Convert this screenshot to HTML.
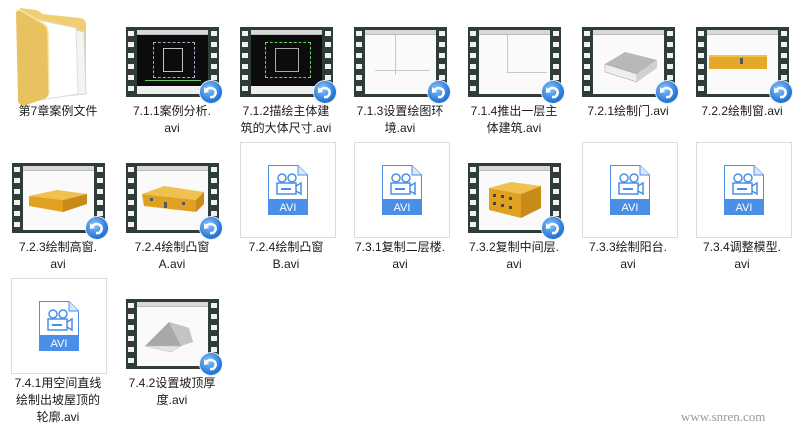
<!DOCTYPE html>
<html><head><meta charset="utf-8"><style>
body{margin:0;width:798px;height:430px;background:#fff;position:relative;overflow:hidden;font-family:"Liberation Sans","Noto Sans CJK SC",sans-serif;}
.lbl{position:absolute;width:112px;text-align:center;font-size:12px;line-height:17px;color:#1a1a1a;}
.box{position:absolute;width:94px;height:94px;border:1px solid #dcdcdc;background:#fff;}
.box svg{position:absolute;left:27px;top:22px;}
.film{position:absolute;width:93px;height:70px;background:#2e3d39;}
.strip{position:absolute;top:0;width:10px;height:70px;background:repeating-linear-gradient(to bottom,transparent 0 4px,#f2f2f2 4px 9px,transparent 9px 11px) no-repeat center/6px 100%;}
.strip.l{left:0}.strip.r{right:0}
.pic{position:absolute;left:11px;top:3px;width:71px;height:64px;background:#fafafa;overflow:hidden;}
.pic .tb{position:absolute;left:0;top:0;width:100%;height:4px;background:#d8d8d8;border-bottom:1px solid #bbb;}
.badge{position:absolute;width:22px;height:22px;border-radius:50%;right:-3px;bottom:-6px;background:radial-gradient(circle at 40% 35%,#8cc4ff,#2a7ddc 60%,#1457b0);box-shadow:0 0 0 1px #e8f0fa;}
.badge svg{position:absolute;left:3px;top:4px}
.dark{background:#0c0c0c}
.ln{position:absolute;background:#c8c8c8}
</style></head><body>

<!-- folder -->
<svg style="position:absolute;left:14px;top:6px" width="80" height="100" viewBox="0 0 80 100">
<path d="M6 2 L22 4 Q26 5 28 8 L66 12 Q72 13 72 18 L72 84 L6 84 Z" fill="#f0cf74"/>
<path d="M30 16 L70 26 L72 88 L32 92 Z" fill="#f4f4f4" stroke="#d6d6d6"/>
<path d="M24 14 L62 22 L64 88 L26 94 Z" fill="#fff" stroke="#dedede"/>
<path d="M2 6 Q4 3 8 5 L30 18 Q34 21 34 27 L35 86 Q35 91 30 93 L12 99 Q4 100 4 94 Z" fill="#e8c25e"/>
<path d="M2 6 Q4 3 8 5 L30 18 Q34 21 34 27 L35 86" fill="none" stroke="#f9e5a6" stroke-width="1.5"/>
</svg>
<div class="lbl" style="left:2px;top:103px">第7章案例文件</div>

<!-- row 1 films -->
<div class="film" style="left:126px;top:27px"><div class="strip l"></div><div class="strip r"></div><div class="pic dark">
<div class="tb"></div>
<div style="position:absolute;left:16px;top:12px;width:40px;height:34px;border:1px dashed #b8a0c8"></div>
<div style="position:absolute;left:26px;top:18px;width:18px;height:22px;border:1px solid #c0c0c0"></div>
<div style="position:absolute;left:8px;top:50px;width:56px;height:1px;background:#6c6"></div>
<div style="position:absolute;left:0;top:56px;width:71px;height:8px;background:#eee"></div>
</div><div class="badge"><svg width="16" height="14"><path d="M3 5 Q8 1 12 5 Q14 9 10 12 L7 12" fill="none" stroke="#fff" stroke-width="2.5"/><path d="M1 2 L6 7 L1 8 Z" fill="#fff"/></svg></div></div>
<div class="lbl" style="left:116px;top:103px">7.1.1案例分析.<br>avi</div>

<div class="film" style="left:240px;top:27px"><div class="strip l"></div><div class="strip r"></div><div class="pic dark">
<div class="tb"></div>
<div style="position:absolute;left:14px;top:12px;width:44px;height:34px;border:1px dashed #6c6"></div>
<div style="position:absolute;left:24px;top:18px;width:22px;height:22px;border:1px solid #aaa"></div>
<div style="position:absolute;left:0;top:56px;width:71px;height:8px;background:#eee"></div>
</div><div class="badge"><svg width="16" height="14"><path d="M3 5 Q8 1 12 5 Q14 9 10 12 L7 12" fill="none" stroke="#fff" stroke-width="2.5"/><path d="M1 2 L6 7 L1 8 Z" fill="#fff"/></svg></div></div>
<div class="lbl" style="left:230px;top:103px">7.1.2描绘主体建<br>筑的大体尺寸.avi</div>

<div class="film" style="left:354px;top:27px"><div class="strip l"></div><div class="strip r"></div><div class="pic">
<div class="tb"></div><div class="ln" style="left:30px;top:5px;width:1px;height:40px"></div><div class="ln" style="left:10px;top:40px;width:55px;height:1px"></div>
</div><div class="badge"><svg width="16" height="14"><path d="M3 5 Q8 1 12 5 Q14 9 10 12 L7 12" fill="none" stroke="#fff" stroke-width="2.5"/><path d="M1 2 L6 7 L1 8 Z" fill="#fff"/></svg></div></div>
<div class="lbl" style="left:344px;top:103px">7.1.3设置绘图环<br>境.avi</div>

<div class="film" style="left:468px;top:27px"><div class="strip l"></div><div class="strip r"></div><div class="pic">
<div class="tb"></div><div class="ln" style="left:28px;top:5px;width:1px;height:38px"></div><div class="ln" style="left:28px;top:42px;width:40px;height:1px"></div>
</div><div class="badge"><svg width="16" height="14"><path d="M3 5 Q8 1 12 5 Q14 9 10 12 L7 12" fill="none" stroke="#fff" stroke-width="2.5"/><path d="M1 2 L6 7 L1 8 Z" fill="#fff"/></svg></div></div>
<div class="lbl" style="left:458px;top:103px">7.1.4推出一层主<br>体建筑.avi</div>

<div class="film" style="left:582px;top:27px"><div class="strip l"></div><div class="strip r"></div><div class="pic">
<div class="tb"></div><svg style="position:absolute;left:8px;top:18px" width="60" height="34"><path d="M4 16 L24 4 L56 12 L36 26 Z" fill="#b8b8b8"/><path d="M4 16 L36 26 L36 34 L4 24 Z" fill="#eee" stroke="#999" stroke-width=".5"/><path d="M36 26 L56 12 L56 20 L36 34 Z" fill="#d0d0d0"/></svg>
</div><div class="badge"><svg width="16" height="14"><path d="M3 5 Q8 1 12 5 Q14 9 10 12 L7 12" fill="none" stroke="#fff" stroke-width="2.5"/><path d="M1 2 L6 7 L1 8 Z" fill="#fff"/></svg></div></div>
<div class="lbl" style="left:572px;top:103px">7.2.1绘制门.avi</div>

<div class="film" style="left:696px;top:27px"><div class="strip l"></div><div class="strip r"></div><div class="pic">
<div class="tb"></div><div style="position:absolute;left:2px;top:25px;width:58px;height:12px;background:#e6a82a;border-top:2px solid #f0c050"></div><div style="position:absolute;left:33px;top:28px;width:3px;height:6px;background:#556"></div>
</div><div class="badge"><svg width="16" height="14"><path d="M3 5 Q8 1 12 5 Q14 9 10 12 L7 12" fill="none" stroke="#fff" stroke-width="2.5"/><path d="M1 2 L6 7 L1 8 Z" fill="#fff"/></svg></div></div>
<div class="lbl" style="left:686px;top:103px">7.2.2绘制窗.avi</div>

<!-- row 2 -->
<div class="film" style="left:12px;top:163px"><div class="strip l"></div><div class="strip r"></div><div class="pic">
<div class="tb"></div><svg style="position:absolute;left:4px;top:20px" width="64" height="30"><path d="M2 10 L30 4 L60 8 L36 14 Z" fill="#f0c050"/><path d="M2 10 L36 14 L36 26 L2 20 Z" fill="#e0a020"/><path d="M36 14 L60 8 L60 18 L36 26 Z" fill="#c88a18"/></svg>
</div><div class="badge"><svg width="16" height="14"><path d="M3 5 Q8 1 12 5 Q14 9 10 12 L7 12" fill="none" stroke="#fff" stroke-width="2.5"/><path d="M1 2 L6 7 L1 8 Z" fill="#fff"/></svg></div></div>
<div class="lbl" style="left:2px;top:239px">7.2.3绘制高窗.<br>avi</div>

<div class="film" style="left:126px;top:163px"><div class="strip l"></div><div class="strip r"></div><div class="pic">
<div class="tb"></div><svg style="position:absolute;left:3px;top:16px" width="66" height="36"><path d="M2 12 L24 4 L64 10 L56 18 Z" fill="#f0c050"/><path d="M2 12 L56 18 L56 30 L4 24 Z" fill="#e0a020"/><path d="M56 18 L64 10 L64 22 L56 30 Z" fill="#c88a18"/><rect x="24" y="20" width="3" height="6" fill="#556"/><rect x="10" y="16" width="3" height="3" fill="#556"/><rect x="42" y="20" width="3" height="3" fill="#556"/></svg>
</div><div class="badge"><svg width="16" height="14"><path d="M3 5 Q8 1 12 5 Q14 9 10 12 L7 12" fill="none" stroke="#fff" stroke-width="2.5"/><path d="M1 2 L6 7 L1 8 Z" fill="#fff"/></svg></div></div>
<div class="lbl" style="left:116px;top:239px">7.2.4绘制凸窗<br>A.avi</div>

<div class="box" style="left:240px;top:142px"><svg width="40" height="50" viewBox="0 0 40 50"><path d="M0.5 0.5 L30 0.5 L39.5 10 L39.5 49.5 L0.5 49.5 Z" fill="#fff" stroke="#4a8fe7"/><path d="M30 0.5 L30 10 L39.5 10" fill="#dbe8fa" stroke="#4a8fe7"/><circle cx="14" cy="13" r="4" fill="none" stroke="#4a8fe7" stroke-width="1.5"/><circle cx="24" cy="13" r="4" fill="none" stroke="#4a8fe7" stroke-width="1.5"/><rect x="9" y="18" width="19" height="11" fill="none" stroke="#4a8fe7" stroke-width="1.5"/><path d="M28 21 L33 18 L33 29 L28 26" fill="none" stroke="#4a8fe7" stroke-width="1.5"/><rect x="13" y="23" width="10" height="2" fill="#4a8fe7"/><rect x="0" y="34" width="40" height="16" fill="#4a8fe7"/><text x="20" y="46" text-anchor="middle" font-size="11" fill="#fff" font-family="Liberation Sans,sans-serif">AVI</text></svg></div>
<div class="lbl" style="left:230px;top:239px">7.2.4绘制凸窗<br>B.avi</div>

<div class="box" style="left:354px;top:142px"><svg width="40" height="50" viewBox="0 0 40 50"><path d="M0.5 0.5 L30 0.5 L39.5 10 L39.5 49.5 L0.5 49.5 Z" fill="#fff" stroke="#4a8fe7"/><path d="M30 0.5 L30 10 L39.5 10" fill="#dbe8fa" stroke="#4a8fe7"/><circle cx="14" cy="13" r="4" fill="none" stroke="#4a8fe7" stroke-width="1.5"/><circle cx="24" cy="13" r="4" fill="none" stroke="#4a8fe7" stroke-width="1.5"/><rect x="9" y="18" width="19" height="11" fill="none" stroke="#4a8fe7" stroke-width="1.5"/><path d="M28 21 L33 18 L33 29 L28 26" fill="none" stroke="#4a8fe7" stroke-width="1.5"/><rect x="13" y="23" width="10" height="2" fill="#4a8fe7"/><rect x="0" y="34" width="40" height="16" fill="#4a8fe7"/><text x="20" y="46" text-anchor="middle" font-size="11" fill="#fff" font-family="Liberation Sans,sans-serif">AVI</text></svg></div>
<div class="lbl" style="left:344px;top:239px">7.3.1复制二层楼.<br>avi</div>

<div class="film" style="left:468px;top:163px"><div class="strip l"></div><div class="strip r"></div><div class="pic">
<div class="tb"></div><svg style="position:absolute;left:6px;top:14px" width="60" height="42"><path d="M4 8 L26 2 L56 6 L36 14 Z" fill="#f0c050"/><path d="M4 8 L36 14 L36 38 L4 30 Z" fill="#e0a020"/><path d="M36 14 L56 6 L56 28 L36 38 Z" fill="#c88a18"/><g fill="#445"><rect x="8" y="14" width="3" height="3"/><rect x="16" y="15" width="3" height="3"/><rect x="24" y="17" width="3" height="3"/><rect x="8" y="22" width="3" height="3"/><rect x="16" y="24" width="3" height="3"/><rect x="24" y="26" width="3" height="3"/></g></svg>
</div><div class="badge"><svg width="16" height="14"><path d="M3 5 Q8 1 12 5 Q14 9 10 12 L7 12" fill="none" stroke="#fff" stroke-width="2.5"/><path d="M1 2 L6 7 L1 8 Z" fill="#fff"/></svg></div></div>
<div class="lbl" style="left:458px;top:239px">7.3.2复制中间层.<br>avi</div>

<div class="box" style="left:582px;top:142px"><svg width="40" height="50" viewBox="0 0 40 50"><path d="M0.5 0.5 L30 0.5 L39.5 10 L39.5 49.5 L0.5 49.5 Z" fill="#fff" stroke="#4a8fe7"/><path d="M30 0.5 L30 10 L39.5 10" fill="#dbe8fa" stroke="#4a8fe7"/><circle cx="14" cy="13" r="4" fill="none" stroke="#4a8fe7" stroke-width="1.5"/><circle cx="24" cy="13" r="4" fill="none" stroke="#4a8fe7" stroke-width="1.5"/><rect x="9" y="18" width="19" height="11" fill="none" stroke="#4a8fe7" stroke-width="1.5"/><path d="M28 21 L33 18 L33 29 L28 26" fill="none" stroke="#4a8fe7" stroke-width="1.5"/><rect x="13" y="23" width="10" height="2" fill="#4a8fe7"/><rect x="0" y="34" width="40" height="16" fill="#4a8fe7"/><text x="20" y="46" text-anchor="middle" font-size="11" fill="#fff" font-family="Liberation Sans,sans-serif">AVI</text></svg></div>
<div class="lbl" style="left:572px;top:239px">7.3.3绘制阳台.<br>avi</div>

<div class="box" style="left:696px;top:142px"><svg width="40" height="50" viewBox="0 0 40 50"><path d="M0.5 0.5 L30 0.5 L39.5 10 L39.5 49.5 L0.5 49.5 Z" fill="#fff" stroke="#4a8fe7"/><path d="M30 0.5 L30 10 L39.5 10" fill="#dbe8fa" stroke="#4a8fe7"/><circle cx="14" cy="13" r="4" fill="none" stroke="#4a8fe7" stroke-width="1.5"/><circle cx="24" cy="13" r="4" fill="none" stroke="#4a8fe7" stroke-width="1.5"/><rect x="9" y="18" width="19" height="11" fill="none" stroke="#4a8fe7" stroke-width="1.5"/><path d="M28 21 L33 18 L33 29 L28 26" fill="none" stroke="#4a8fe7" stroke-width="1.5"/><rect x="13" y="23" width="10" height="2" fill="#4a8fe7"/><rect x="0" y="34" width="40" height="16" fill="#4a8fe7"/><text x="20" y="46" text-anchor="middle" font-size="11" fill="#fff" font-family="Liberation Sans,sans-serif">AVI</text></svg></div>
<div class="lbl" style="left:686px;top:239px">7.3.4调整模型.<br>avi</div>

<!-- row 3 -->
<div class="box" style="left:11px;top:278px"><svg width="40" height="50" viewBox="0 0 40 50"><path d="M0.5 0.5 L30 0.5 L39.5 10 L39.5 49.5 L0.5 49.5 Z" fill="#fff" stroke="#4a8fe7"/><path d="M30 0.5 L30 10 L39.5 10" fill="#dbe8fa" stroke="#4a8fe7"/><circle cx="14" cy="13" r="4" fill="none" stroke="#4a8fe7" stroke-width="1.5"/><circle cx="24" cy="13" r="4" fill="none" stroke="#4a8fe7" stroke-width="1.5"/><rect x="9" y="18" width="19" height="11" fill="none" stroke="#4a8fe7" stroke-width="1.5"/><path d="M28 21 L33 18 L33 29 L28 26" fill="none" stroke="#4a8fe7" stroke-width="1.5"/><rect x="13" y="23" width="10" height="2" fill="#4a8fe7"/><rect x="0" y="34" width="40" height="16" fill="#4a8fe7"/><text x="20" y="46" text-anchor="middle" font-size="11" fill="#fff" font-family="Liberation Sans,sans-serif">AVI</text></svg></div>
<div class="lbl" style="left:2px;top:375px">7.4.1用空间直线<br>绘制出坡屋顶的<br>轮廓.avi</div>

<div class="film" style="left:126px;top:299px"><div class="strip l"></div><div class="strip r"></div><div class="pic">
<div class="tb"></div><svg style="position:absolute;left:4px;top:16px" width="64" height="36"><path d="M4 28 L28 4 L48 10 L46 20 L40 28 Z" fill="#a8a8a8"/><path d="M28 4 L48 10 L52 24 L40 28 Z" fill="#c4c4c4"/><path d="M4 28 L40 28 L30 34 Z" fill="#e4e4e4" stroke="#bbb" stroke-width=".5"/></svg>
</div><div class="badge"><svg width="16" height="14"><path d="M3 5 Q8 1 12 5 Q14 9 10 12 L7 12" fill="none" stroke="#fff" stroke-width="2.5"/><path d="M1 2 L6 7 L1 8 Z" fill="#fff"/></svg></div></div>
<div class="lbl" style="left:116px;top:375px">7.4.2设置坡顶厚<br>度.avi</div>

<div style="position:absolute;left:681px;top:409px;font-family:'Liberation Serif',serif;font-size:13px;color:#9a9a9a;">www.snren.com</div>
</body></html>
